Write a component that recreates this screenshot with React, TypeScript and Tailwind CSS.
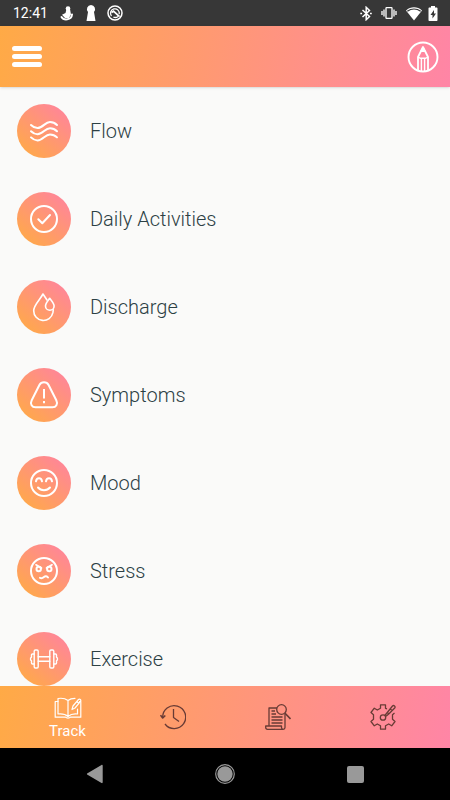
import type { ReactNode } from "react";

type Category = {
    label: string;
    icon: ReactNode;
};

type Tab = {
    label: string;
    icon: ReactNode;
    active?: boolean;
};

const categories: Category[] = [
    {
        label: "Flow",
        icon: (
            <>
                <path d="M1 8c2 2 4 3 6.5 3C13 11 15 5 20 5c3 0 5 1 7 3" />
                <path d="M1 14.2c2 2 4 3 6.5 3 5.5 0 7.5-6 12.5-6 3 0 5 1 7 3" />
                <path d="M1 20.4c2 2 4 3 6.5 3 5.5 0 7.5-6 12.5-6 3 0 5 1 7 3" />
            </>
        ),
    },
    {
        label: "Daily Activities",
        icon: (
            <>
                <circle cx="14" cy="14" r="13" />
                <path d="M8.3 14.3l4 4 7.7-8.3" />
            </>
        ),
    },
    {
        label: "Discharge",
        icon: (
            <g strokeWidth="1.6">
                <path d="M17 7L13 1C9.5 7.5 3.7 12 3.7 17.7a9.7 9.7 0 0 0 19.2 2l.4-3" />
                <path d="M19.7 5.3c-2 2.7-4.2 5-4.2 7.6a4.3 4.3 0 0 0 8.6 0c0-2.6-2.4-4.9-4.4-7.6z" />
            </g>
        ),
    },
    {
        label: "Symptoms",
        icon: (
            <>
                <path d="M9.4 4L1.7 19.2C-.2 23 2 26.3 5.5 26.3h17c3.5 0 5.7-3.3 3.8-7.1L18.6 4a5.2 5.2 0 0 0-9.2 0z" />
                <path d="M14 8v9.5M14 20v2.2" strokeLinecap="butt" />
            </>
        ),
    },
    {
        label: "Mood",
        icon: (
            <>
                <circle cx="14" cy="14" r="13" />
                <path d="M6 12.3c.5-4 5.5-4 6 0M16 12.3c.5-4 5.5-4 6 0M8 18.5c3 3.6 9 3.6 12 0" />
            </>
        ),
    },
    {
        label: "Stress",
        icon: (
            <>
                <circle cx="14" cy="14" r="13" />
                <circle cx="8.7" cy="12" r="2.2" />
                <circle cx="19.3" cy="12" r="2.2" />
                <path d="M6 7.8l5.5 3.2M22 7.8l-5.5 3.2" strokeWidth="1.7" />
                <path d="M10 20.8c2 1 3 0 4-.9 1.2-1 3-.8 4 .6" />
            </>
        ),
    },
    {
        label: "Exercise",
        icon: (
            <g strokeWidth="1.4">
                <rect x="4.2" y="5" width="4" height="18" rx="1.2" />
                <rect x="19.8" y="5" width="4" height="18" rx="1.2" />
                <path d="M4.2 9H2.5a1 1 0 0 0-1 1v2.3L.6 13v2l.9.7V18a1 1 0 0 0 1 1h1.7M23.8 9h1.7a1 1 0 0 1 1 1v2.3l.9.7v2l-.9.7V18a1 1 0 0 1-1 1h-1.7M8.2 11.7h11.6M8.2 16.3h11.6" />
            </g>
        ),
    },
];

const tabs: Tab[] = [
    {
        label: "Track",
        active: true,
        icon: (
            <svg viewBox="0 0 28 22" className="h-[22px] w-7" fill="none" stroke="currentColor" strokeWidth="1.2" strokeLinejoin="round" strokeLinecap="round">
                <path d="M14 3.5C11 1.2 7 1 4 1.5V17c4-.4 7.5.2 10 2.5V3.5c1.5-1.3 4-2.2 7-2.2M14 19.5c2.5-2.3 6-2.9 9.5-2.5v-5" />
                <path d="M4 4.5H1.2v15.7h10.3c1 1.2 4 1.2 5 0h10.3V4.5h-1.3" />
                <path d="M18 12.5l1-3.5 5.5-6.5c1.2-1 3 .5 2 1.8L21 11l-3 1.5zM22.8 4.5l2 1.7" />
            </svg>
        ),
    },
    {
        label: "History",
        icon: (
            <svg viewBox="0 0 26 26" className="h-[26px] w-[26px]" fill="none" stroke="currentColor" strokeWidth="1.3" strokeLinejoin="round">
                <path d="M2.7 13.5A11.5 11.5 0 1 1 5 20" />
                <path d="M.5 11.2l2.2 2.8 2.6-2.5" strokeWidth="1.6" />
                <path d="M13.5 5v8.5l5.5 4" />
            </svg>
        ),
    },
    {
        label: "Report",
        icon: (
            <svg viewBox="0 0 26 26" className="h-[26px] w-[26px]" fill="none" stroke="currentColor" strokeWidth="1.3" strokeLinejoin="round">
                <path d="M12 4H4v18M20 10v13.5c0 1.2-.7 1.8-1.8 1.8H2.5c-1.2 0-1.8-.7-1.8-1.8V22h15.8v1.5c0 1 .6 1.8 1.7 1.8" />
                <circle cx="16.5" cy="5.5" r="4.8" />
                <path d="M19.8 9l5.7 6" strokeWidth="1.6" />
                <path d="M6.5 7H10M6.5 10H11M6.5 13h11M6.5 16h11M6.5 19h11" />
            </svg>
        ),
    },
    {
        label: "Settings",
        icon: (
            <svg viewBox="0 0 26 26" className="h-[26px] w-[26px]" fill="none" stroke="currentColor" strokeWidth="1.3" strokeLinejoin="round">
                <path d="M17 4.9l-1.5-.6V.8h-5v3.5L7.3 6 4.3 4.2 1 8.5l2.5 2.2v4.6L1 17.5l3.3 4.3 3-1.8 3.2 1.7v3.5h5v-3.5l3.2-1.7 3 1.8 3.3-4.3-2.5-2.2v-4.6l2-1.7" />
                <circle cx="13" cy="13.5" r="2.7" />
                <path d="M14.8 11.5l2.5-3L22.5 2c1.3-1.2 3.3.5 2.2 2L19 9.8l-3 2.5M17.3 8.5l1.7 1.6M20.3 5l2 1.8" />
            </svg>
        ),
    },
];

function StatusBar() {
    return (
        <div className="flex h-[26px] shrink-0 items-center justify-between bg-[#373737] px-3 text-white">
            <div className="flex items-center">
                <span className="w-12 pl-px text-sm leading-[26px]">12:41</span>
                <svg viewBox="0 0 14 15" className="h-[15px] w-[14px]" fill="currentColor">
                    <circle cx="8" cy="2.6" r="2.3" />
                    <path d="M6.5 3H10L11 8.5 9 12H5L2 8.8 5.5 7z" />
                    <path d="M1.5 11c2 3.5 10 3.5 10.500-2.500" fill="none" stroke="currentColor" strokeWidth="2" strokeLinecap="round" />
                </svg>
                <svg viewBox="0 0 10 16" className="ml-3 h-4 w-[10px]" fill="currentColor">
                    <path d="M5 0a4.2 4.2 0 0 1 3 7L9.5 16h-9L2 7A4.2 4.2 0 0 1 5 0z" />
                </svg>
                <svg viewBox="0 0 16 16" className="ml-[11px] h-4 w-4" fill="none" stroke="currentColor">
                    <circle cx="8" cy="8" r="7" strokeWidth="1.5" />
                    <path d="M4.5 11A4.4 4.4 0 1 1 12.2 9.2M11 11.4a4.4 4.4 0 0 1-4.6.7" strokeWidth="1.3" />
                    <path d="M4.5 7.5l2-1.3 6 5.5" strokeWidth="1.8" />
                </svg>
            </div>
            <div className="flex items-center">
                <svg viewBox="0 0 12 15" className="h-[15px] w-3" fill="none" stroke="currentColor" strokeWidth="1.5">
                    <path d="M2.5 4l7 6.5L6.2 13.7V1.3L9.5 4.5l-7 6.5" />
                    <path d="M.3 7.5h1.8M10 7.5h1.8" strokeWidth="1.6" />
                </svg>
                <svg viewBox="0 0 16 14" className="ml-[9px] h-[14px] w-4" fill="none" stroke="currentColor" strokeWidth="1.3">
                    <rect x="5" y="1.7" width="6" height="10.6" rx=".6" />
                    <path d="M3 3.5v7M1 5v4M13 3.5v7M15 5v4" />
                </svg>
                <svg viewBox="0 0 18 15" className="ml-2 h-[15px] w-[18px]">
                    <path d="M9 14.5L1 4.5C5.5.2 12.5.2 17 4.5z" fill="currentColor" />
                    <path d="M2.3 5.3c4-3 9.4-3 13.4 0" fill="none" stroke="#373737" strokeWidth="1.2" />
                </svg>
                <svg viewBox="0 0 10 15" className="ml-[5px] h-[15px] w-[10px]">
                    <path d="M3 0h4v1.5h1.5c.6 0 1 .4 1 1V14c0 .6-.4 1-1 1h-7c-.6 0-1-.4-1-1V2.5c0-.6.4-1 1-1H3z" fill="currentColor" />
                    <path d="M6 4L2.5 9h2v3.5L8 7.5H6z" fill="#373737" />
                </svg>
            </div>
        </div>
    );
}

function Header() {
    return (
        <header className="z-10 flex h-[61px] shrink-0 items-center justify-between bg-[linear-gradient(100deg,#ffaa46,#ff85a6)] pl-3 pr-[11px] text-white shadow-sm">
            <button type="button" aria-label="Menu" className="flex w-[30px] flex-col gap-[3px]">
                <span className="h-[5px] rounded-full bg-white" />
                <span className="h-[5px] rounded-full bg-white" />
                <span className="h-[5px] rounded-full bg-white" />
            </button>
            <button type="button" aria-label="Edit">
                <svg viewBox="0 0 32 32" className="h-8 w-8" fill="none" stroke="currentColor" strokeLinejoin="round">
                    <circle cx="16" cy="16" r="14.5" strokeWidth="1.9" />
                    <path d="M11 29.5V16l5-10 5 10v13.5" strokeWidth="1.8" />
                    <path d="M14.4 30V17M17.6 30V17" strokeWidth="1.4" />
                    <path d="M11 16l2.5 1.3h5L21 16" strokeWidth="1.4" />
                    <path d="M13.5 10.5L16 6l2.5 4.5z" fill="currentColor" strokeWidth="1" />
                </svg>
            </button>
        </header>
    );
}

export default function App() {
    return (
        <div className="flex h-dvh flex-col bg-[#fafaf9] font-['Roboto',sans-serif]">
            <StatusBar />
            <Header />

            {/* categories */}
            <main className="min-h-0 flex-1 overflow-y-auto [scrollbar-width:none]">
                <ul>
                    {categories.map((category) => (
                        <li key={category.label}>
                            <button type="button" className="flex h-[88px] w-full items-center gap-[18px] px-4 text-left">
                                <span className="flex size-14 shrink-0 items-center justify-center rounded-full border border-transparent bg-[linear-gradient(40deg,#ffa94a_10%,#ff859a_90%)] bg-clip-padding text-white">
                                    <svg
                                        viewBox="0 0 28 28"
                                        className="size-7 overflow-visible"
                                        fill="none"
                                        stroke="currentColor"
                                        strokeWidth="2"
                                        strokeLinecap="round"
                                        strokeLinejoin="round"
                                    >
                                        {category.icon}
                                    </svg>
                                </span>
                                <span className="text-xl font-light text-[#2c4044]">{category.label}</span>
                            </button>
                        </li>
                    ))}
                </ul>
            </main>

            {/* tabs */}
            <nav className="flex h-[62px] shrink-0 bg-[linear-gradient(100deg,#ffaa46,#ff85a6)] px-[15px]">
                {tabs.map((tab) => (
                    <a
                        key={tab.label}
                        href={`#${tab.label.toLowerCase()}`}
                        aria-label={tab.label}
                        className={`flex flex-1 flex-col items-center justify-center ${tab.active ? "pt-0.5 text-white" : "text-[#683b35]"}`}
                    >
                        {tab.icon}
                        {tab.active && <span className="pt-1 text-[15px] leading-4">{tab.label}</span>}
                    </a>
                ))}
            </nav>

            {/* android buttons */}
            <div className="flex h-[52px] shrink-0 items-center bg-black px-[30px] text-[#999999]">
                <button type="button" aria-label="Back" className="flex flex-1 justify-center">
                    <svg viewBox="0 0 18 20" className="h-5 w-[18px]" fill="currentColor">
                        <path d="M1.5 9.2L15.5 1c.7-.4 1.2 0 1.2.7v16.6c0 .7-.5 1.1-1.2.7L1.5 10.8c-.8-.4-.8-1.2 0-1.6z" />
                    </svg>
                </button>
                <button type="button" aria-label="Home" className="flex flex-1 justify-center">
                    <svg viewBox="0 0 20 20" className="size-5">
                        <circle cx="10" cy="10" r="9.3" fill="none" stroke="currentColor" strokeWidth="1.2" />
                        <circle cx="10" cy="10" r="7.7" fill="currentColor" />
                    </svg>
                </button>
                <button type="button" aria-label="Recent apps" className="flex flex-1 justify-center">
                    <span className="size-[17px] rounded-xs bg-[#999999]" />
                </button>
            </div>
        </div>
    );
}
